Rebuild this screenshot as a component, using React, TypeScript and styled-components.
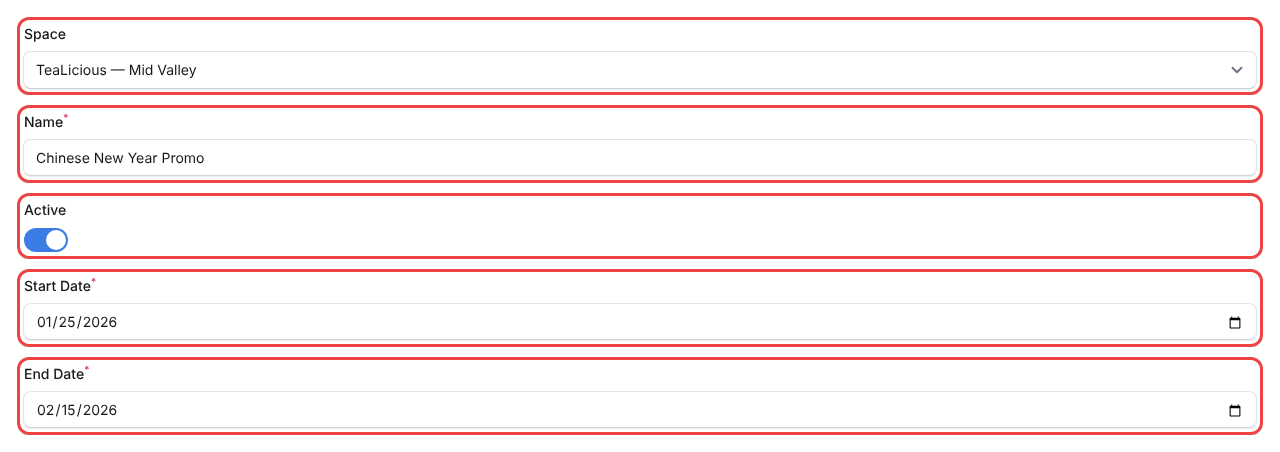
import { useState } from "react";
import styled, { createGlobalStyle } from "styled-components";
import { ChevronDown } from "lucide-react";

const GlobalStyle = createGlobalStyle`
  html, body {
    margin: 0;
    background: #ffffff;
  }
  body {
    font-family: Inter, "Liberation Sans", sans-serif;
    color: #111827;
    text-rendering: geometricPrecision;
  }
`;

const Form = styled.form`
  display: flex;
  flex-direction: column;
  gap: 16px;
  padding: 20px;
  will-change: opacity;
`;

const Field = styled.div<{ $compact?: boolean }>`
  display: flex;
  flex-direction: column;
  height: ${(p) => (p.$compact ? 60 : 72)}px;
  box-sizing: border-box;
  padding: 4px 3px;
  border-radius: 9px;
  outline: 3px solid #ef4444;
`;

const Label = styled.label`
  display: block;
  box-sizing: border-box;
  padding: 1px 0 0 1px;
  height: 20px;
  font-size: 14px;
  line-height: 20px;
  font-weight: 500;
  color: #18181b;
`;

const Required = styled.sup`
  color: #e11d48;
  font-size: 10px;
  line-height: 0;
`;

const SelectWrap = styled.div`
  position: relative;
  margin-top: 7px;
`;

const inputLook = `
  display: block;
  width: 100%;
  height: 38px;
  box-sizing: border-box;
  padding: 0 12px;
  border: 1px solid #e4e4e7;
  border-bottom-color: #d4d4d8;
  border-radius: 8px;
  background: #ffffff;
  box-shadow: 0 1px 1px rgba(0, 0, 0, 0.08);
  font-family: Inter, "Liberation Sans", sans-serif;
  font-size: 14px;
  color: #18181b;
  text-rendering: geometricPrecision;
  outline: none;
`;

const Select = styled.select`
  ${inputLook}
  appearance: none;
`;

const Caret = styled(ChevronDown)`
  position: absolute;
  top: 10px;
  right: 11px;
  width: 18px;
  height: 18px;
  color: #6b7280;
  pointer-events: none;
`;

const Input = styled.input`
  ${inputLook}
  margin-top: 7px;
  padding-top: 2px;
`;

const Switch = styled.button<{ $on: boolean }>`
  position: relative;
  display: block;
  width: 44px;
  height: 24px;
  margin: 8px 0 0 1px;
  padding: 0;
  border: none;
  border-radius: 999px;
  background: ${(p) => (p.$on ? "#3b7de4" : "#d4d4d8")};
  cursor: pointer;
`;

const Knob = styled.span<{ $on: boolean }>`
  position: absolute;
  top: 2px;
  left: ${(p) => (p.$on ? 22 : 2)}px;
  width: 20px;
  height: 20px;
  border-radius: 50%;
  background: #ffffff;
`;

export default function App() {
  const [active, setActive] = useState(true);
  const [name, setName] = useState("Chinese New Year Promo");
  const [start, setStart] = useState("2026-01-25");
  const [end, setEnd] = useState("2026-02-15");

  return (
    <>
      <GlobalStyle />
      <Form>
        <Field>
          <Label htmlFor="space">Space</Label>
          <SelectWrap>
            <Select id="space" defaultValue="midvalley">
              <option value="midvalley">TeaLicious — Mid Valley</option>
            </Select>
            <Caret strokeWidth={2.5} />
          </SelectWrap>
        </Field>
        <Field>
          <Label htmlFor="name">
            Name<Required>*</Required>
          </Label>
          <Input id="name" value={name} onChange={(e) => setName(e.target.value)} />
        </Field>
        <Field $compact>
          <Label>Active</Label>
          <Switch type="button" $on={active} onClick={() => setActive((prev) => !prev)}>
            <Knob $on={active} />
          </Switch>
        </Field>
        <Field>
          <Label htmlFor="start">
            Start Date<Required>*</Required>
          </Label>
          <Input id="start" type="date" value={start} onChange={(e) => setStart(e.target.value)} />
        </Field>
        <Field>
          <Label htmlFor="end">
            End Date<Required>*</Required>
          </Label>
          <Input id="end" type="date" value={end} onChange={(e) => setEnd(e.target.value)} />
        </Field>
      </Form>
    </>
  );
}
